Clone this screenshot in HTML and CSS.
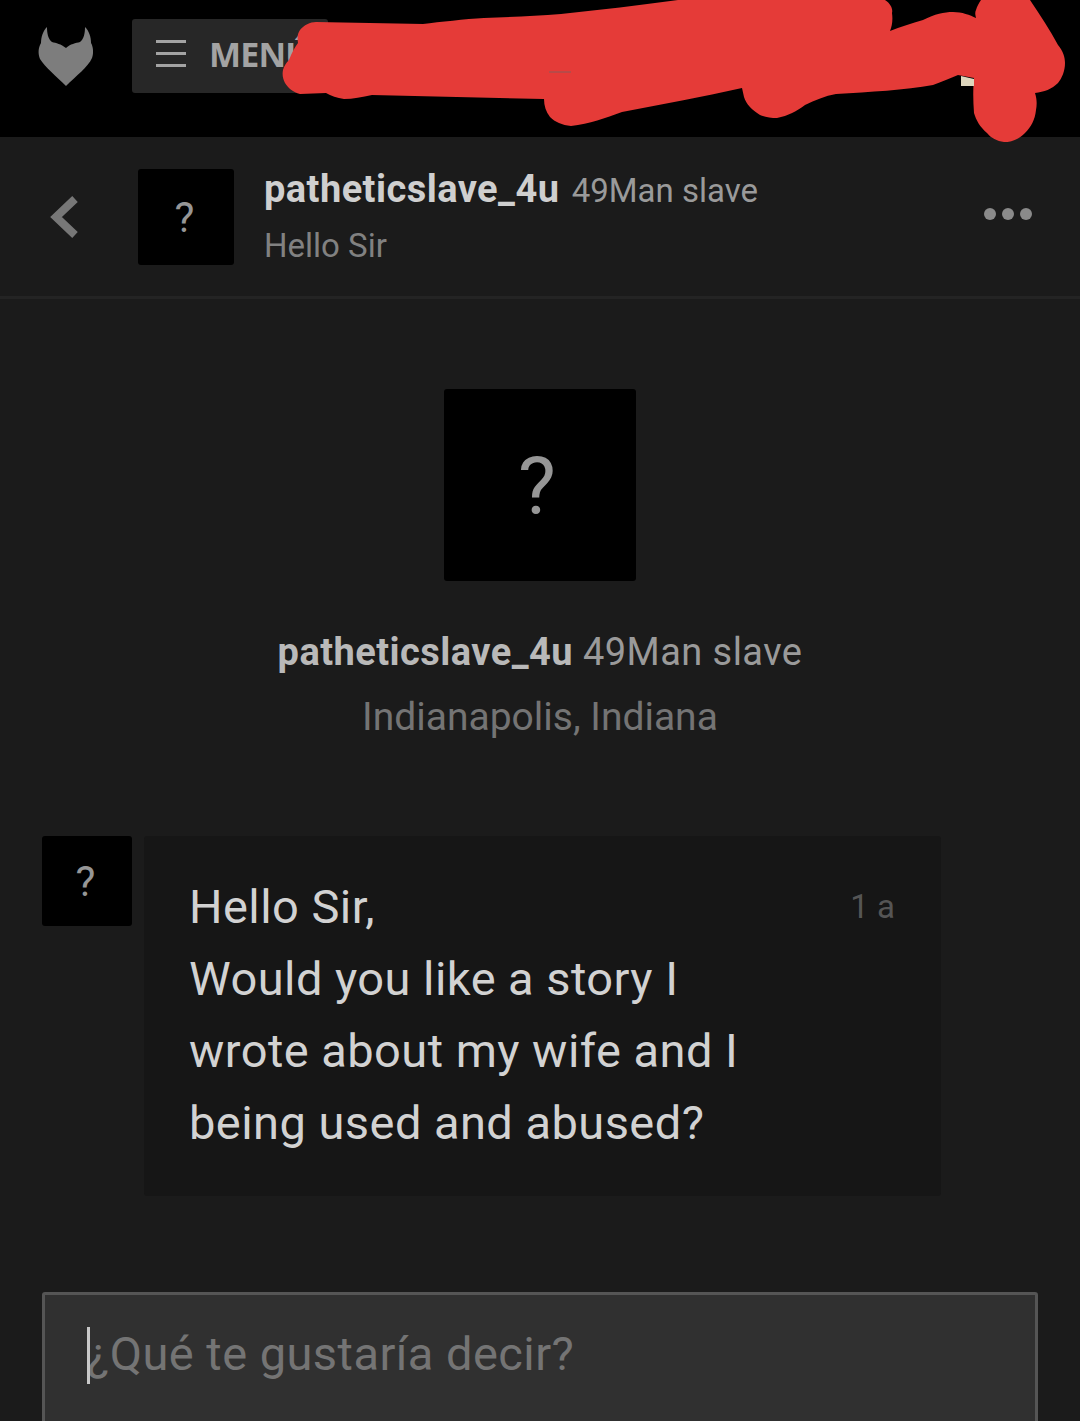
FILE: index.html
```html
<!DOCTYPE html>
<html lang="es">
<head>
  <meta charset="UTF-8">
  <meta name="viewport" content="width=device-width, initial-scale=1.0">
  <title>Mensajes</title>
  <link rel="stylesheet" href="styles.css">
</head>
<body>
  <header class="topbar">
    <svg class="logo" viewBox="0 0 56 62" width="56" height="62">
      <path d="M9 1C9 7 10 13 14 16C18 17 23 18 28 22C32 18 38 17 42 16C46 13 47 7 47 1C51 5 53 11 53 17C55 20 56 27 54 32C50 41 38 50 28 60C18 50 7 41 2 33C0 28 0 22 3 17C3 11 5 5 9 1Z" fill="#7d7d7d"/>
    </svg>
    <div class="menu-btn">
      <svg class="burger" viewBox="0 0 30 27" width="30" height="27">
        <path d="M0 1.500H30M0 13.500H30M0 25.500H30" stroke="#a3a3a3" stroke-width="3" fill="none"/>
      </svg>
      <span class="menu-label">MENÚ</span>
    </div>
  </header>

  <svg class="scribble" viewBox="0 0 1080 145" width="1080" height="145">
    <path d="M283 70C284 66 286 63 289 60C292 52 295 47 298 43C297 36 298 33 300 30C304 25 310 22 316 22L423 24C440 22 465 19 484 18C510 17 535 16 561 14C600 10 640 5 678 0L885 0C891 4 893 9 892 13C893 20 892 26 890 31C900 27 912 23 923 20C935 14 944 12 953 12C962 12 970 15 976 18C975 14 975 12 976 10C977 6 979 3 981 0L1030 0C1040 15 1050 30 1058 45C1063 51 1065 57 1065 63C1065 71 1062 78 1058 83C1052 89 1044 92 1035 93C1037 99 1037 105 1036 110C1035 120 1031 127 1025 133C1019 139 1012 142 1004 142C997 141 991 138 987 133C980 127 976 120 974 113C973 100 973 88 974 78L958 75C950 78 942 82 933 85C905 90 870 92 836 94C825 96 815 100 805 105C797 111 788 116 777 118C771 118 765 117 760 115C752 110 746 104 744 97L742 88C702 97 662 104 622 112C605 118 590 124 571 126C562 125 555 122 550 117C546 112 544 106 544 99L372 95C362 97 353 99 344 99C337 98 331 96 326 93L300 94C293 92 288 88 285 83C283 79 282 75 283 70Z" fill="#e53b38"/>
    <path d="M961 76L974 79V86H961Z" fill="#ded6bd"/>
    <path d="M549 72H571" stroke="#8c5a58" stroke-width="1" fill="none"/>
  </svg>

  <section class="convo-bar">
    <svg class="back" viewBox="0 0 28 42" width="28" height="42">
      <path d="M25 3L6 21L25 39" stroke="#777" stroke-width="8" fill="none"/>
    </svg>
    <div class="avatar avatar-sm">?</div>
    <div class="convo-info">
      <div class="convo-title"><b>patheticslave_4u</b> <span>49Man slave</span></div>
      <div class="convo-last">Hello Sir</div>
    </div>
    <div class="dots"><i></i><i></i><i></i></div>
  </section>

  <section class="profile">
    <div class="avatar avatar-lg">?</div>
    <div class="profile-name"><b>patheticslave_4u</b> 49Man slave</div>
    <div class="profile-place">Indianapolis, Indiana</div>
  </section>

  <section class="thread">
    <div class="avatar avatar-msg">?</div>
    <div class="bubble">
      <p class="bubble-text">Hello Sir,<br>Would you like a story I<br>wrote about my wife and I<br>being used and abused?</p>
      <span class="bubble-time">1 a</span>
    </div>
  </section>

  <div class="composer">
    <span class="caret"></span><span class="placeholder">¿Qué te gustaría decir?</span>
  </div>
</body>
</html>
```

FILE: styles.css
```css
html, body {
  margin: 0;
  padding: 0;
}

body {
  width: 1080px;
  height: 1421px;
  overflow: hidden;
  position: relative;
  background-color: #1b1b1b;
  font-family: Roboto, sans-serif;
}

.topbar {
  height: 137px;
  box-sizing: border-box;
  background-color: #000;
  display: flex;
  align-items: flex-start;
  padding: 19px 0 0 38px;
}

.logo {
  margin-top: 7px;
  margin-right: 38px;
}

.menu-btn {
  width: 196px;
  height: 74px;
  box-sizing: border-box;
  background-color: #272727;
  border-radius: 3px;
  display: flex;
  align-items: center;
  padding: 0 0 5px 24px;
}

.menu-label {
  margin-left: 23px;
  font-family: "Open Sans", sans-serif;
  font-weight: 700;
  font-size: 34px;
  letter-spacing: -0.8px;
  color: #a3a3a3;
}

.scribble {
  position: absolute;
  top: 0;
  left: 0;
}

.convo-bar {
  height: 162px;
  box-sizing: border-box;
  border-bottom: 3px solid #242424;
  display: flex;
  align-items: flex-start;
  padding-top: 32px;
  position: relative;
}

.back {
  margin: 27px 0 0 50px;
}

.avatar {
  background-color: #000;
  border-radius: 3px;
  color: #969696;
  display: flex;
  align-items: center;
  justify-content: center;
  flex-shrink: 0;
}

.avatar-sm {
  width: 96px;
  height: 96px;
  margin-left: 60px;
  font-size: 42px;
  letter-spacing: 3px;
}

.convo-info {
  margin-top: -1px;
  margin-left: 30px;
}

.convo-title {
  font-size: 33px;
  line-height: 42px;
  color: #9a9a9a;
}

.convo-title b {
  font-size: 38px;
  letter-spacing: 0.45px;
  color: #cfcfcf;
  margin-right: 4px;
}

.convo-last {
  margin-top: 13px;
  font-size: 33px;
  line-height: 42px;
  color: #818181;
}

.dots {
  position: absolute;
  top: 71px;
  left: 984px;
  display: flex;
  gap: 6px;
}

.dots i {
  width: 12px;
  height: 12px;
  border-radius: 50%;
  background-color: #8a8a8a;
}

.profile {
  display: flex;
  flex-direction: column;
  align-items: center;
  padding-top: 90px;
}

.avatar-lg {
  width: 192px;
  height: 192px;
  box-sizing: border-box;
  padding-top: 3px;
  font-size: 80px;
  letter-spacing: 6px;
}

.profile-name {
  margin-top: 49px;
  font-size: 38px;
  line-height: 44px;
  letter-spacing: 0.45px;
  color: #9a9a9a;
}

.profile-name b {
  color: #b9b9b9;
}

.profile-place {
  margin-top: 21px;
  font-size: 39px;
  line-height: 44px;
  color: #747474;
}

.thread {
  display: flex;
  align-items: flex-start;
  gap: 12px;
  margin-top: 97px;
  padding-left: 42px;
}

.avatar-msg {
  width: 90px;
  height: 90px;
  font-size: 42px;
  letter-spacing: 3px;
}

.bubble {
  width: 797px;
  height: 360px;
  box-sizing: border-box;
  background-color: #161616;
  border-radius: 3px;
  padding: 35px 46px 35px 45px;
  display: flex;
  justify-content: space-between;
  align-items: flex-start;
}

.bubble-text {
  margin: 0;
  font-size: 47px;
  line-height: 72px;
  letter-spacing: 0.45px;
  color: #d2d2d2;
}

.bubble-time {
  font-size: 33px;
  line-height: 72px;
  color: #555;
}

.composer {
  margin: 96px 0 0 42px;
  width: 996px;
  height: 160px;
  box-sizing: border-box;
  background-color: #303030;
  border: 3px solid #555;
  border-radius: 3px;
  padding: 32px 0 0 42px;
  display: flex;
  align-items: flex-start;
}

.caret {
  width: 3px;
  height: 57px;
  background-color: #c8c8c8;
  margin-right: -3px;
  position: relative;
}

.placeholder {
  margin-top: -2px;
  font-size: 47px;
  line-height: 57px;
  letter-spacing: 0.45px;
  color: #747474;
}
```
